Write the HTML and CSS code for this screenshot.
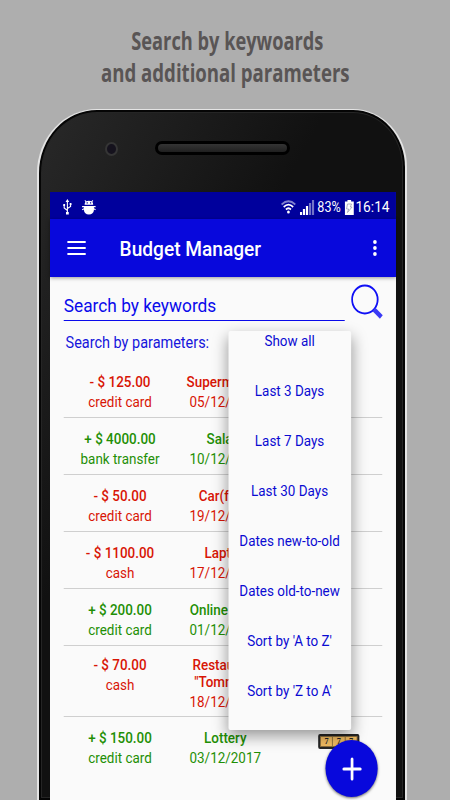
FILE: index.html
```html
<!DOCTYPE html>
<html lang="en">
<head>
  <meta charset="UTF-8">
  <meta name="viewport" content="width=device-width, initial-scale=1.0">
  <title>Budget Manager</title>
  <link rel="stylesheet" href="styles.css">
</head>
<body>
  <h1 class="promo">
    <span class="promo-first">Search by keywoards</span>
    <span class="promo-second">and additional parameters</span>
  </h1>

  <div class="phone">
    <div class="phone-top">
      <div class="camera"></div>
      <div class="speaker"></div>
    </div>

    <div class="screen">
      <!-- Status bar -->
      <div class="status">
        <svg class="usb" width="10" height="16" viewBox="0 0 10 16" fill="none" stroke="#fff" stroke-width="1.2">
          <path d="M5 2v12M5 11.500L1.500 9V6M5 9.500L8.500 7.500V5"/>
          <path d="M5 0l2 3H3zM3.500 13h3v2.500h-3zM.5 5h2v2h-2zM7.500 4h2v2h-2z" fill="#fff" stroke="none"/>
        </svg>
        <svg class="bug" width="15" height="15" viewBox="0 0 15 15" fill="#fff">
          <path d="M3.300 0l1.400 1.300Q7.500.4 10.300 1.300L11.700 0l.5.500-.9 1.500q.9 1 .9 2.800H2.800q0-1.800.9-2.800L2.800.5z"/>
          <path d="M2 6h11v4q-.5 4.300-5.500 4.500Q2.500 14.300 2 10z"/>
          <path d="M0 6.600h15M0 9.800L4 8M15 9.800L11 8" stroke="#fff" stroke-width="1.200"/>
          <path d="M5 2.200h1.300v1.300H5zM8.700 2.200H10v1.300H8.700z" fill="#00009c"/>
        </svg>
        <span class="spacer"></span>
        <svg class="wifi" width="17" height="14" viewBox="0 0 17 14" fill="none" stroke="#fff" stroke-width="1.700">
          <path d="M1 4.500q7.500-6.500 15 0" opacity=".5"/>
          <path d="M3.300 7q5.200-4.600 10.400 0M5.700 9.500q2.800-2.500 5.600 0"/>
          <circle cx="8.500" cy="12" r="1.500" fill="#fff" stroke="none"/>
        </svg>
        <svg class="signal" width="16" height="15" viewBox="0 0 16 15" fill="#fff">
          <path d="M0 12h2.400v3H0zM3.300 9h2.400v6H3.300zM6.600 6H9v9H6.600z"/>
          <path d="M9.900 3h2.400v12H9.900zM13.200 0h2.400v15h-2.400z" opacity=".45"/>
        </svg>
        <span class="percent">83%</span>
        <svg class="battery" width="10" height="15" viewBox="0 0 10 15">
          <path d="M3 0h4v1.500h3V15H0V1.500h3z" fill="#fff"/>
          <path d="M3 4h4.500L6 7h2l-5 5.500L4.300 9H2z" fill="none" stroke="#9999b5" stroke-width=".8"/>
        </svg>
        <span class="clock">16:14</span>
      </div>

      <!-- App bar -->
      <div class="appbar">
        <div class="hamburger"><i></i><i></i><i></i></div>
        <h2>Budget Manager</h2>
        <div class="more"><i></i><i></i><i></i></div>
      </div>

      <div class="content">
        <div class="search">
          <div class="search-input">Search by keywords</div>
          <svg class="search-icon" width="36" height="36" viewBox="0 0 36 36" fill="none" stroke="#1010f5">
            <circle cx="15" cy="15.500" r="14" stroke-width="2"/>
            <path d="M25 25.500L33 33" stroke="#3a3af5" stroke-width="4.500"/>
          </svg>
        </div>
        <div class="params">Search by parameters:</div>

        <div class="list">
          <div class="row expense">
            <div><b>- $ 125.00</b><p>credit card</p></div>
            <div><b>Supermarket</b><p>05/12/2017</p></div>
          </div>
          <div class="row income">
            <div><b>+ $ 4000.00</b><p>bank transfer</p></div>
            <div><b>Salary</b><p>10/12/2017</p></div>
          </div>
          <div class="row expense">
            <div><b>- $ 50.00</b><p>credit card</p></div>
            <div><b>Car(fuel)</b><p>19/12/2017</p></div>
          </div>
          <div class="row expense">
            <div><b>- $ 1100.00</b><p>cash</p></div>
            <div><b>Laptop</b><p>17/12/2017</p></div>
          </div>
          <div class="row income">
            <div><b>+ $ 200.00</b><p>credit card</p></div>
            <div><b>Online shop</b><p>01/12/2017</p></div>
          </div>
          <div class="row expense tall">
            <div><b>- $ 70.00</b><p>cash</p></div>
            <div><b>Restaurant<br>"Tommy's"</b><p>18/12/2017</p></div>
          </div>
          <div class="row income">
            <div><b>+ $ 150.00</b><p>credit card</p></div>
            <div><b>Lottery</b><p>03/12/2017</p></div>
            <div class="slot"><span>7</span><span>7</span><span>7</span></div>
          </div>
        </div>
      </div>

      <!-- Filter menu -->
      <div class="menu">
        <div>Show all</div>
        <div>Last 3 Days</div>
        <div>Last 7 Days</div>
        <div>Last 30 Days</div>
        <div>Dates new-to-old</div>
        <div>Dates old-to-new</div>
        <div>Sort by 'A to Z'</div>
        <div>Sort by 'Z to A'</div>
      </div>

      <div class="fab">
        <svg width="22" height="24" viewBox="0 0 22 24" stroke="#fff" stroke-width="3" stroke-linecap="round">
          <path d="M11 2v20M2 12h18"/>
        </svg>
      </div>
    </div>
  </div>
</body>
</html>
```
FILE: styles.css
```css
* {
  box-sizing: border-box;
}
body {
  margin: 0;
  height: 800px;
  overflow: hidden;
  background: #aeaeae;
  font-family: Roboto, sans-serif;
}
.promo {
  margin: 0;
  height: 109px;
  padding-top: 24px;
  display: flex;
  flex-direction: column;
  align-items: center;
  font: 700 25.5px/32px "Open Sans", sans-serif;
  color: #595555;
  white-space: nowrap;
}
.promo-first {
  transform: translateX(2px) scaleX(0.715);
}
.promo-second {
  transform: scaleX(0.73);
}

/* Phone body */
.phone {
  width: 370px;
  height: 691px;
  margin-left: 37px;
  padding: 0 11px;
  border: 2px solid #e4e4e4;
  border-top-width: 1px;
  border-bottom: none;
  border-radius: 60px 54px 0 0 / 64px 58px 0 0;
  background: linear-gradient(120deg, #292929 0, #111 250px);
  box-shadow: inset 0 0 0 2px #050505, inset 0 0 0 3px #252525;
}
.phone-top {
  height: 82px;
  display: flex;
  align-items: flex-start;
  padding: 31px 0 0 55px;
}
.camera {
  width: 13px;
  height: 14px;
  margin-top: 1px;
  border: 2px solid #353535;
  border-radius: 50%;
  background: #15121d;
}
.speaker {
  width: 135px;
  height: 14px;
  margin-left: 37px;
  border: 3px solid #000;
  border-radius: 7px;
  background: linear-gradient(#343434, #202020);
}

/* The display is laid out on a wider grid and squeezed to the phone width */
.screen {
  position: relative;
  width: 378px;
  height: 608px;
  transform: scaleX(0.9153);
  transform-origin: 0 0;
  background: #fafafa;
}
.status {
  height: 27px;
  padding: 3px 7px 0 14px;
  display: flex;
  align-items: center;
  background: #00009c;
  color: #fff;
  font-size: 14px;
}
.bug {
  margin-left: 11px;
}
.spacer {
  flex: 1;
}
.wifi {
  margin-right: 4px;
}
.signal {
  margin-right: 3px;
}
.percent {
  font-size: 13.8px;
}
.battery {
  margin: 0 2px 0 4px;
}
.clock {
  font-size: 15px;
}
.appbar {
  height: 58px;
  padding: 0 21px 0 19px;
  display: flex;
  align-items: center;
  background: #0808dc;
  box-shadow: 0 1px 4px rgba(0, 0, 0, 0.4);
  color: #fff;
}
.appbar h2 {
  flex: 1;
  margin: 2px 0 0 37px;
  font-size: 20.9px;
  font-weight: 500;
}
.hamburger {
  width: 20px;
}
.hamburger i {
  display: block;
  height: 2px;
  margin: 4px 0;
  background: #fff;
}
.more i {
  display: block;
  width: 4.5px;
  height: 4.5px;
  margin: 1.5px 0;
  border-radius: 50%;
  background: #fff;
}

.content {
  padding: 7px 15px 0;
}
.search {
  display: flex;
  align-items: flex-start;
  color: #0a0aeb;
}
.search-input {
  flex: none;
  width: 307px;
  height: 37px;
  padding-top: 10px;
  border-bottom: 1px solid #0a0aeb;
  font-size: 18.9px;
  line-height: 24px;
}
.search-icon {
  flex: none;
  margin-left: 7px;
}
.params {
  padding: 12px 0 0 2px;
  height: 40px;
  font-size: 15.8px;
  line-height: 20px;
  color: #1515dc;
}
.row {
  height: 57px;
  padding-top: 12.5px;
  display: grid;
  grid-template-columns: 123px 107px 1fr;
  border-bottom: 1px solid #cfcfcf;
  font-size: 14.7px;
  line-height: 17px;
  text-align: center;
}
.row b {
  font-weight: 500;
}
.row p {
  margin: 3px 0 0;
}
.row:last-child {
  border: none;
}
.tall {
  height: 71px;
  padding-top: 11px;
}
.expense {
  color: #d81505;
}
.income {
  color: #1f8f05;
}
.slot {
  width: 45px;
  height: 15px;
  margin: 4px 0 0 48px;
  padding: 1px;
  display: flex;
  gap: 1px;
  border: 2px solid #252525;
  border-radius: 2px;
  background: #8a6d3c;
  color: #222;
  font: bold 9px/9px "Liberation Serif", serif;
}
.slot span {
  flex: 1;
  background: #f3bd62;
}

.menu {
  position: absolute;
  left: 194.5px;
  top: 139px;
  width: 134.5px;
  height: 399px;
  overflow: hidden;
  border-radius: 2px;
  background: #fafafa;
  box-shadow: 0 6px 16px rgba(0, 0, 0, 0.4);
  color: #0a0ad2;
  font-size: 14.7px;
  text-align: center;
}
.menu div {
  height: 50px;
  line-height: 50px;
}
.menu div:first-child {
  height: 35px;
  line-height: 21px;
}
.fab {
  position: absolute;
  left: 301px;
  top: 548px;
  width: 57px;
  height: 57px;
  display: flex;
  align-items: center;
  justify-content: center;
  border-radius: 50%;
  background: #0808dc;
  box-shadow: 0 1px 3px rgba(0, 0, 0, 0.6);
}
```
